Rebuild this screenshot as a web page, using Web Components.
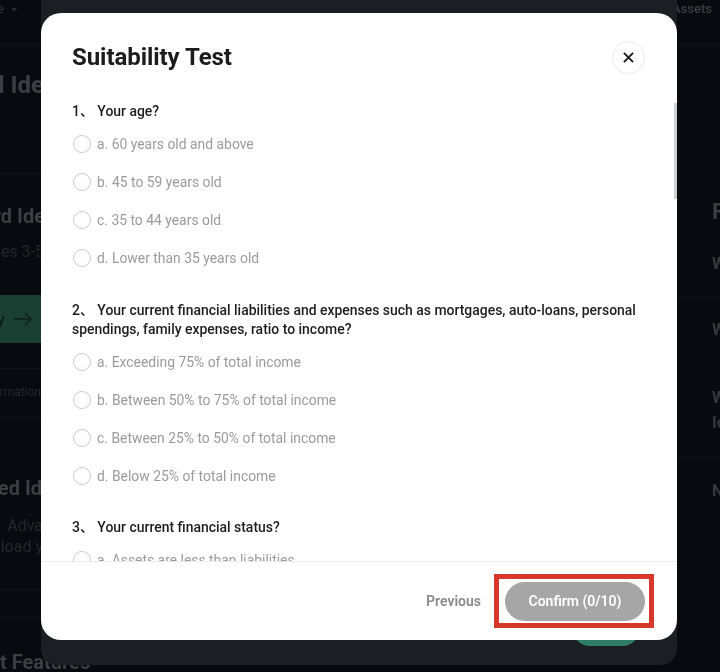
<!doctype html>
<html lang="en"><head><meta charset="utf-8"><title>Suitability Test</title>
<style>
html,body{margin:0;padding:0;height:100%;background:#070a0f;}
body{font-family:Roboto,"Noto Sans CJK SC",sans-serif;overflow:hidden;}
</style></head><body>
<bg-page>
  <suit-modal heading="Suitability Test">
    <suit-question style="margin-bottom:1px" text="1、 Your age?">
      <suit-option>a. 60 years old and above</suit-option>
      <suit-option>b. 45 to 59 years old</suit-option>
      <suit-option>c. 35 to 44 years old</suit-option>
      <suit-option>d. Lower than 35 years old</suit-option>
    </suit-question>
    <suit-question text="2、 Your current financial liabilities and expenses such as mortgages, auto-loans, personal spendings, family expenses, ratio to income?">
      <suit-option>a. Exceeding 75% of total income</suit-option>
      <suit-option>b. Between 50% to 75% of total income</suit-option>
      <suit-option>c. Between 25% to 50% of total income</suit-option>
      <suit-option>d. Below 25% of total income</suit-option>
    </suit-question>
    <suit-question text="3、 Your current financial status?">
      <suit-option>a. Assets are less than liabilities</suit-option>
    </suit-question>
  </suit-modal>
</bg-page>
<script>
function el(name, css, html){
  customElements.define(name, class extends HTMLElement{
    connectedCallback(){
      if(this.shadowRoot) return;
      const r=this.attachShadow({mode:'open'});
      const body=typeof html==='function'?html(this):html;
      r.innerHTML='<style>'+css+'</style>'+body;
    }
  });
}
el('bg-page',`
:host{display:block;width:720px;height:672px;position:relative;overflow:hidden;background:#070a0f;filter:blur(.45px);font-family:Roboto,"Noto Sans CJK SC",sans-serif}
.cols{display:grid;grid-template-columns:41px 636px 43px;height:672px}
.l{display:flex;flex-direction:column;position:relative}
.r{display:flex;flex-direction:column;grid-column:3;overflow:hidden}
.row{display:flex;justify-content:flex-end;white-space:nowrap;overflow:hidden;width:41px;flex:none}
.b{font-weight:700;color:#3c3e42}
.rule{height:1px;background:#101318;flex:none}
.green{height:48px;background:#1a3f33;display:flex;justify-content:flex-end;align-items:center;gap:9px;width:41px;overflow:hidden;color:#0d1f1a;font-size:17px;font-weight:500;flex:none}
.green svg{flex:none}
.dim{color:#25272b;font-size:16px;line-height:21px}
.tail{white-space:nowrap;font-weight:700;color:#3c3e42;font-size:20px;line-height:28px;flex:none}
.rt{color:#36383c;font-weight:700;white-space:nowrap;padding-left:35px;font-size:16px;line-height:20px;flex:none}
.panel{position:absolute;left:41px;top:0;width:636px;height:665px;background:#1b1e23;border-radius:0 0 16px 16px}
.pill{position:absolute;left:531px;top:610px;width:68px;height:36px;background:#2f7d63;border-radius:18px}
.slot{position:absolute;left:0;top:13px;width:636px;height:627px}
`,`
<div class="cols">
  <div class="l">
    <div class="row" style="height:18px;font-size:13px;color:#36383c;line-height:18px;justify-content:flex-start;margin-left:-3px"><span>e</span><svg width="8" height="6" viewBox="0 0 8 6" style="margin:7px 0 0 6px"><path d="M1 1.2 4 4.6 7 1.2Z" fill="#2c2e32"/></svg></div>
    <div class="rule" style="margin-top:26px"></div>
    <div class="row b" style="margin-top:25px;font-size:24px;line-height:30px"><span style="margin-right:-3px">l Ide</span></div>
    <div class="rule" style="margin-top:73px"></div>
    <div class="row b" style="margin-top:29px;font-size:20px;line-height:26px"><span style="margin-right:-4px">rd Ide</span></div>
    <div class="row dim" style="margin-top:12px"><span style="margin-right:-3px">es 3-5</span></div>
    <div class="green" style="margin-top:33px"><span>y</span><svg width="18" height="14" viewBox="0 0 18 14" fill="none" stroke="#0d1f1a" stroke-width="1.4" style="margin-right:9px"><path d="M0 7H17M11 1l6 6-6 6"/></svg></div>
    <div class="rule" style="margin-top:25px"></div>
    <div class="row dim" style="margin-top:13px;font-size:12px;line-height:20px"><span>rmation</span></div>
    <div class="rule" style="margin-top:15px"></div>
    <div class="row b" style="margin-top:57px;font-size:20px;line-height:26px"><span style="margin-right:-1px">ed Id</span></div>
    <div class="row dim" style="margin-top:14px"><span style="margin-right:-2px">Adva</span></div>
    <div class="row dim"><span style="margin-right:-2px">load y</span></div>
    <div class="rule" style="margin-top:32px"></div>
    <div class="rule" style="margin-top:27px"></div>
    <div class="tail" style="margin-top:30px"><span>t Features</span></div>
  </div>
  <div class="r">
    <div style="height:18px;font-size:13px;line-height:18px;color:#3c3e42;font-weight:500;white-space:nowrap;margin-left:-5px;flex:none">Assets</div>
    <div class="rule" style="margin-top:26px"></div>
    <div class="rt" style="margin-top:155px;font-size:22px;line-height:24px;color:#3a3c40">F</div>
    <div class="rt" style="margin-top:30px">W</div>
    <div class="rule" style="margin-top:23px"></div>
    <div class="rt" style="margin-top:22px">W</div>
    <div class="rt" style="margin-top:48px">W</div>
    <div class="rt" style="margin-top:5px">Io</div>
    <div class="rule" style="margin-top:24px"></div>
    <div class="rt" style="margin-top:23px">N</div>
  </div>
</div>
<div class="panel"><div class="pill"></div><div class="slot"><slot></slot></div></div>
`);
el('suit-modal',`
:host{display:flex;flex-direction:column;width:636px;height:627px;background:#fff;border-radius:20px;overflow:hidden;position:relative;color:#1a1a1a}
header{flex:none;height:89px;box-sizing:border-box;padding:28px 32px 0 31px;display:flex;justify-content:space-between;align-items:flex-start}
h1{margin:0;font-size:24px;line-height:32px;font-weight:700;color:#1c1c1c;letter-spacing:-.06px}
.x{width:33px;height:33px;box-sizing:border-box;border:1px solid #ebebeb;border-radius:50%;display:flex;align-items:center;justify-content:center;background:#fff}
main{flex:1;min-height:0;overflow:hidden;padding:0 31px;display:flex;flex-direction:column;gap:23px}
footer{flex:none;height:79px;box-sizing:border-box;border-top:1px solid #ececec;display:flex;justify-content:flex-end;align-items:center;padding:0 32px 0 0;gap:24px}
.prev{font-size:14px;font-weight:600;color:#8a8a8a}
.conf{width:140px;height:39px;border-radius:20px;background:#a6a6a6;color:#fff;font-size:14px;font-weight:600;display:flex;align-items:center;justify-content:center}
.bar{position:absolute;right:0;top:90px;width:3px;height:96px;background:#cfcfcf}
.mark{position:absolute;left:453px;top:561px;width:159.5px;height:54px;box-sizing:border-box;border:5px solid #d8372b}
`,h=>`
<header><h1>${h.getAttribute('heading')}</h1>
<div class="x"><svg width="11" height="11" viewBox="0 0 12 12" fill="none" stroke="#1c1c1c" stroke-width="2.1"><path d="M1 1 11 11M11 1 1 11"/></svg></div></header>
<main><slot></slot></main>
<footer><span class="prev">Previous</span><span class="conf">Confirm (0/10)</span></footer>
<div class="bar"></div><div class="mark"></div>
`);
el('suit-question',`
:host{display:block;flex:none}
.q{font-size:13.95px;line-height:19px;font-weight:500;color:#1d1d1d;margin:0 0 4px}
.opts{display:flex;flex-direction:column}
`,h=>`<p class="q">${h.getAttribute('text')}</p><div class="opts"><slot></slot></div>`);
el('suit-option',`
:host{display:flex;align-items:center;height:38px;gap:6px;color:#9b9b9b;font-size:13.9px;padding-left:1px}
.r{width:18px;height:18px;box-sizing:border-box;border:1.5px solid #c9c9c9;border-radius:50%;flex:none;background:#fff}
`,`<span class="r"></span><span><slot></slot></span>`);
</script>
</body></html>
